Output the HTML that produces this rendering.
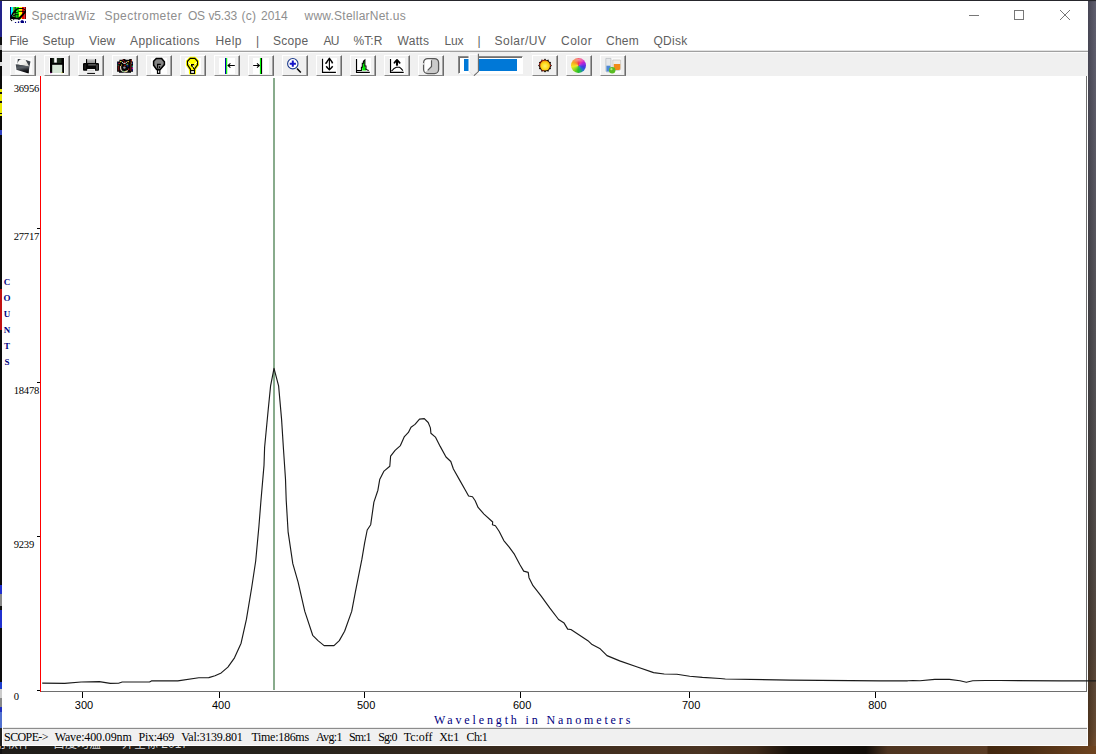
<!DOCTYPE html>
<html lang="en">
<head>
<meta charset="utf-8">
<title>SpectraWiz Spectrometer OS</title>
<style>
html,body{margin:0;padding:0;}
body{width:1096px;height:754px;overflow:hidden;position:relative;background:#1c1a17;font-family:"Liberation Sans",sans-serif;}
.abs{position:absolute;}
#desk-right{left:1088px;top:0;width:8px;height:754px;background:linear-gradient(to right,rgba(0,0,0,.16),rgba(255,255,255,.07)),linear-gradient(to bottom,#3a3a46 0px,#545364 2px,#535262 60px,#4a484e 300px,#48464a 380px,#463f3b 560px,#4a3a2e 650px,#5c3e23 730px,#70441f 754px);}
#desk-bottom{left:0;top:746px;width:1096px;height:8px;background:linear-gradient(to right,#1f1d19 0%,#25221c 25%,#33281d 40%,#3e2d1f 52%,#45301f 58%,#4a3422 64%,#3e2a1a 69%,#18110a 72%,#120d08 79%,#4d3420 81%,#5a3c24 90%,#42270f 90.2%,#4c2e14 94%,#6e4420 100%);}
#desk-text{left:0;top:746px;width:300px;height:8px;overflow:hidden;font-family:"Liberation Sans","Noto Sans CJK SC",sans-serif;font-size:12px;line-height:12px;color:#d8d8d8;}
#desk-text span{position:absolute;top:-8px;white-space:pre;text-shadow:0 0 1px #000;}
#desk-left{left:0;top:0;width:2px;height:754px;background:linear-gradient(to bottom,#333 0px,#333 1px,#22228a 1px,#22228a 37px,#111 37px,#111 45px,#aaa 45px,#aaa 50px,#0a0a0a 50px,#0a0a0a 62px,#ddd 62px,#ddd 66px,#0a0a0a 66px,#0a0a0a 88.7px,#e8e800 88.7px,#e8e800 92px,#111 92px,#111 94px,#e8e800 94px,#e8e800 101px,#111 101px,#111 103.5px,#e8e800 103.5px,#e8e800 113px,#111 113px,#111 114.5px,#e8e800 114.5px,#e8e800 116.4px,#0a0a0a 116.4px,#0a0a0a 129.6px,#3040c0 129.6px,#3040c0 135.4px,#0c0c0c 135.4px,#0c0c0c 288.5px,#c01010 288.5px,#c01010 330px,#0c0c0c 330px,#0c0c0c 585px,#2030d0 585px,#2030d0 594px,#888 594px,#888 606px,#111 606px,#111 610px,#2030d0 610px,#2030d0 628px,#0c0c0c 628px,#0c0c0c 682.5px,#2040d0 682.5px,#2040d0 689px,#ccc 689px,#ccc 698px,#888 698px,#888 707px,#2030c0 707px,#2030c0 712px,#5070d0 712px,#5070d0 728px,#222 728px,#222 746px,#111 746px,#111 754px);}
#desk-top{left:0;top:0;width:1096px;height:1px;background:#26262c;}
#win{left:2px;top:1px;width:1086px;height:745px;background:#fff;}
/* title */
.tt{position:absolute;top:8px;font-size:12px;line-height:16px;color:#8e8e8e;white-space:pre;}
.mn{position:absolute;top:32.5px;font-size:12px;line-height:16px;color:#606060;white-space:pre;}
#menusep1{left:2px;top:50px;width:1086px;height:1px;background:#e3e3e3;}
#menusep2{left:2px;top:51px;width:1086px;height:1px;background:#a0a0a0;}
#toolbar{left:2px;top:52px;width:1086px;height:24px;background:#f0f0f0;}
.btn{position:absolute;top:55px;width:26px;height:21px;background:#f0f0f0;box-sizing:border-box;border-left:1px solid #fff;border-top:1px solid #fff;border-right:1px solid #6b6b6b;border-bottom:1px solid #868686;box-shadow:inset -1px 0 0 #a4a4a4;}
.btn svg{position:absolute;}
/* plot */
#plot{left:2px;top:76px;width:1086px;height:652px;background:#fff;}
.yl{position:absolute;font-family:"Liberation Serif",serif;font-size:10.6px;line-height:11px;color:#000;left:13.8px;white-space:pre;letter-spacing:-0.26px;}
.xl{position:absolute;font-family:"Liberation Sans",sans-serif;font-size:11px;line-height:11px;color:#000;width:40px;text-align:center;top:700px;}
.cnt{position:absolute;left:3px;width:8px;text-align:center;font-family:"Liberation Serif",serif;font-weight:bold;font-size:9px;line-height:9px;color:#000080;}
#xlabel{left:434px;top:714.3px;font-family:"Liberation Serif",serif;font-size:12px;line-height:12px;color:#000080;white-space:pre;letter-spacing:2.87px;}
#statline{left:3px;top:727px;width:1084px;height:2px;background:linear-gradient(to bottom,#ececec 0,#ececec 1px,#8c8c8c 1px,#8c8c8c 2px);}
#status{left:3px;top:729px;width:1084px;height:16px;background:#f0f0f0;}
.st{position:absolute;top:729.6px;font-family:"Liberation Serif",serif;font-size:12px;line-height:14px;color:#000;white-space:pre;}
</style>
</head>
<body>
<div class="abs" id="desk-right"></div>
<div class="abs" id="desk-bottom"></div>
<div class="abs" id="desk-left"></div>
<div class="abs" id="desk-text"><span style="left:-6px">用软件</span><span style="left:53px">白度均温</span><span style="left:122px">外空标 2017</span></div>
<div class="abs" id="desk-top"></div>
<div class="abs" id="win"></div>

<!-- TITLE BAR -->
<svg class="abs" id="appicon" style="left:10px;top:7px" width="16" height="16" viewBox="0 0 16 16">
<rect x="0" y="0" width="1" height="12" fill="#000080"/><rect x="1" y="0" width="2.2" height="12" fill="#00ffff"/><rect x="3.2" y="0" width="1" height="12" fill="#808000"/><rect x="4.2" y="0" width="2" height="12" fill="#008000"/><rect x="6.2" y="0" width="3" height="12" fill="#00ff00"/><rect x="9.2" y="0" width="2.8" height="12" fill="#ffff00"/><rect x="12" y="0" width="2.6" height="12" fill="#ff0000"/><rect x="14.6" y="0" width="1.4" height="12" fill="#800000"/>
<path d="M7.4 1.5 H13 L15.6 3.4 M8.4 4.3 H14.6" stroke="#000" stroke-width="1" fill="none"/>
<path d="M16 3 L16 5.2 L10 12.4 L8.4 13 L8.2 11 L13 6 L14.4 4.2 Z" fill="#000"/>
<path d="M7.6 1.6 L6 3 L5 4.4 L3.4 5.6 L2.4 7.4 L1.4 8.8 L0.6 10.4" stroke="#000" stroke-width="1.5" fill="none"/>
<path d="M0.2 10.2 L2 9 L3.4 9.8 L6 10.6 L9.6 10.4 L9.4 12.4 L5 12.2 L0.6 12 Z" fill="#000"/>
<path d="M4.4 3.6 H6.2 M3.6 5.6 H7.8 M5 7.4 H8.6 M3 8.6 H5.4 M6.4 9 H8.4" stroke="#000" stroke-width="0.9" fill="none"/>
<rect x="0" y="12.2" width="1.4" height="0.9" fill="#000"/><rect x="1" y="13.1" width="1.2" height="1" fill="#000"/><rect x="3" y="12.3" width="1.2" height="0.8" fill="#000"/>
<rect x="4.9" y="15" width="1.3" height="1.1" fill="#000080"/><rect x="7.9" y="14.4" width="1.3" height="1.7" fill="#000080"/><path d="M10.3 14.6 L11.4 13.2 H13 L14 14.4 V16.1 H11 Z" fill="#000080"/><rect x="15.1" y="14" width="1" height="2.1" fill="#000080"/>
</svg>
<span class="tt" style="left:31.5px;letter-spacing:0.28px">SpectraWiz</span>
<span class="tt" style="left:104.5px;letter-spacing:0.47px">Spectrometer</span>
<span class="tt" style="left:188px;letter-spacing:-0.27px">OS</span>
<span class="tt" style="left:208.5px;letter-spacing:-0.17px">v5.33</span>
<span class="tt" style="left:241.5px;letter-spacing:0.2px">(c)</span>
<span class="tt" style="left:261px;letter-spacing:0px">2014</span>
<span class="tt" style="left:304.5px;letter-spacing:0.235px">www.StellarNet.us</span>
<svg class="abs" style="left:960px;top:4px" width="120" height="24" viewBox="0 0 120 24">
<path d="M9 11.5 H19" stroke="#777" stroke-width="1" fill="none"/>
<rect x="54.5" y="6.5" width="9" height="9" stroke="#777" stroke-width="1" fill="none"/>
<path d="M100 6 L110 16 M110 6 L100 16" stroke="#777" stroke-width="1" fill="none"/>
</svg>

<!-- MENU -->
<span class="mn" style="left:9.5px;letter-spacing:-0.17px">File</span>
<span class="mn" style="left:42.5px;letter-spacing:0.16px">Setup</span>
<span class="mn" style="left:89px;letter-spacing:0.1px">View</span>
<span class="mn" style="left:130px;letter-spacing:0.44px">Applications</span>
<span class="mn" style="left:215.5px;letter-spacing:0.4px">Help</span>
<span class="mn" style="left:256px">|</span>
<span class="mn" style="left:273px;letter-spacing:0.28px">Scope</span>
<span class="mn" style="left:323.5px;letter-spacing:-0.65px">AU</span>
<span class="mn" style="left:353.5px;letter-spacing:0.05px">%T:R</span>
<span class="mn" style="left:397.5px;letter-spacing:0.32px">Watts</span>
<span class="mn" style="left:444.5px;letter-spacing:-0.23px">Lux</span>
<span class="mn" style="left:477.5px">|</span>
<span class="mn" style="left:494.5px;letter-spacing:0.49px">Solar/UV</span>
<span class="mn" style="left:561px;letter-spacing:0.5px">Color</span>
<span class="mn" style="left:606px;letter-spacing:0.22px">Chem</span>
<span class="mn" style="left:653.5px;letter-spacing:0.24px">QDisk</span>
<div class="abs" id="menusep1"></div>
<div class="abs" id="menusep2"></div>

<!-- TOOLBAR -->
<div class="abs" id="toolbar"></div>
<div class="abs" style="left:2px;top:52px;width:448px;height:1px;background:#fbfbfb"></div>
<div class="abs" style="left:531px;top:52px;width:557px;height:1px;background:#fbfbfb"></div>
<!--BUTTONS-->
<div class="btn" style="left:10px"><svg width="24" height="20" viewBox="0 0 24 20" style="left:0;top:0"><rect x="4" y="2" width="17" height="16" fill="#fbfbfb"/><defs><linearGradient id="fg" x1="0.2" y1="0" x2="0.45" y2="1"><stop offset="0" stop-color="#3c4248"/><stop offset="0.4" stop-color="#5c6268"/><stop offset="0.75" stop-color="#1c1e22"/><stop offset="1" stop-color="#050506"/></linearGradient><linearGradient id="pp" x1="0" y1="0" x2="1" y2="1"><stop offset="0" stop-color="#ffffff"/><stop offset="0.6" stop-color="#f0f0ec"/><stop offset="1" stop-color="#c8c8c0"/></linearGradient></defs><path d="M6.8 3 L9.2 3 L14.9 4 L19.5 5.5 L18.4 10.8 L17.6 17 L6 13 Z" fill="#3a4046"/><path d="M6.2 7.4 Q7.6 4.2 9 3.4 Q11.6 2.2 14.6 4 L18.2 10.6 L4.8 8.2 Z" fill="url(#pp)"/><path d="M4.7 8.2 L17.9 10.5 L17.6 17.5 L5.4 13.7 Z" fill="url(#fg)"/></svg></div>
<div class="btn" style="left:44px"><svg width="24" height="20" viewBox="0 0 24 20" style="left:0;top:0"><rect x="4" y="2" width="16" height="16" fill="#fff"/><rect x="5" y="2" width="14" height="15" fill="#000"/><rect x="7.5" y="2" width="9" height="5" fill="#1c2a1c"/><rect x="9.2" y="2" width="2.6" height="4.6" fill="#fff"/><rect x="7.2" y="8.8" width="10" height="8.2" fill="#d6e6d6"/><rect x="5" y="16.4" width="1.6" height="0.8" fill="#800080"/><rect x="16.4" y="16.4" width="1.2" height="0.8" fill="#c0c000"/></svg></div>
<div class="btn" style="left:78px"><svg width="24" height="20" viewBox="0 0 24 20" style="left:0;top:0"><defs><linearGradient id="pg" x1="0" y1="0" x2="0" y2="1"><stop offset="0" stop-color="#c4c4c4"/><stop offset="1" stop-color="#8c8c8c"/></linearGradient></defs><rect x="7.4" y="3.2" width="9.4" height="4.4" fill="url(#pg)"/><rect x="7" y="3.1" width="1.1" height="4.6" fill="#000"/><rect x="16" y="3.1" width="1.1" height="4.6" fill="#000"/><path d="M4.6 7 H19.4 L20 7.8 V14 L19.4 14.7 H4.6 L4 14 V7.8 Z" fill="#050505"/><rect x="9.2" y="8.2" width="7.6" height="1.3" fill="#6a6a6a"/><rect x="17.2" y="8.6" width="1.6" height="5.2" fill="#4a4a4a"/><rect x="5.6" y="8.4" width="1" height="4.6" fill="#2c2c2c"/><rect x="8.2" y="13" width="7.8" height="4" fill="#f2f2f2"/><rect x="8.2" y="16.9" width="7.8" height="1" fill="#000"/><rect x="9" y="14.4" width="6" height="0.8" fill="#c4c4c4"/></svg></div>
<div class="btn" style="left:112px"><svg width="24" height="20" viewBox="0 0 24 20" style="left:0;top:0"><path d="M4.1 5.6 H6.4 V3.7 H9.8 V2.9 H12.4 V3.7 H16.2 V2.9 H18.8 V5.6 H20 V15.8 H18 V16.8 H6 V15.8 H4.1 Z" fill="#050505"/><path d="M7.6 10 Q7 15.6 11.4 15.8 Q14 15.8 14.8 14.4" fill="none" stroke="#d8c8b8" stroke-width="1.2"/><path d="M8.6 5.6 L10.6 7.4 L12.4 7.4 L14.4 5.4" fill="none" stroke="#d8d8d0" stroke-width="1"/><circle cx="11.4" cy="11.6" r="1.2" fill="#9090a0"/><rect x="9.6" y="3.6" width="1.2" height="1.2" fill="#c01010"/><rect x="11" y="5.6" width="1.2" height="1.2" fill="#e02020"/><rect x="14.8" y="5" width="1.2" height="1.2" fill="#e0b020"/><rect x="7" y="5" width="1.2" height="1.2" fill="#d8d020"/><rect x="5.4" y="6.8" width="1.4" height="1.2" fill="#d02020"/><rect x="11.4" y="8.8" width="1.2" height="1.2" fill="#d01010"/><rect x="13.2" y="8" width="1.4" height="1.4" fill="#10a090"/><rect x="14" y="9.2" width="1.4" height="1.4" fill="#1020a0"/><rect x="14.2" y="7.6" width="1" height="1" fill="#e0d020"/><rect x="8" y="8.6" width="1" height="1" fill="#e0c020"/><rect x="5" y="9" width="1.2" height="5.6" fill="#701010"/><rect x="4.6" y="8.6" width="1" height="1" fill="#10a060"/><rect x="17.2" y="8" width="1.4" height="7" fill="#601818"/><rect x="18.8" y="9.6" width="1.2" height="1.6" fill="#10a080"/><rect x="18.8" y="11.4" width="1.2" height="1.8" fill="#c010a0"/><rect x="18.8" y="13.2" width="1.2" height="1.4" fill="#1020a0"/><rect x="18.6" y="6.4" width="1.2" height="1.4" fill="#1020a0"/><rect x="17.8" y="6.6" width="1" height="1" fill="#e0d040"/><rect x="17.8" y="3.8" width="1" height="1" fill="#d01010"/><rect x="17.6" y="5.6" width="1" height="1" fill="#d01010"/><rect x="15" y="12.6" width="1.2" height="1.2" fill="#d02020"/><rect x="9.6" y="14.8" width="1.2" height="1" fill="#40c060"/><rect x="12.4" y="14.8" width="1.4" height="1" fill="#e0e060"/><rect x="4.2" y="6.4" width="1" height="1.2" fill="#101080"/></svg></div>
<div class="btn" style="left:146px"><svg width="24" height="20" viewBox="0 0 24 20" style="left:0;top:0"><rect x="4" y="2" width="16" height="16" fill="#fff"/><path d="M9.3 2.4 H14.6 L17.4 5.8 V8.6 L13.2 13.4 H9.6 L6.6 9.2 V5.3 Z" fill="#848484" stroke="#000" stroke-width="1.5" stroke-linejoin="miter"/><rect x="10.5" y="14" width="2.3" height="3.4" fill="#fff" stroke="#000" stroke-width="1.2"/><path d="M10.6 12.6 V8.4 H13.8 M12.6 10.2 V12" fill="none" stroke="#000" stroke-width="1.1"/></svg></div>
<div class="btn" style="left:180px"><svg width="24" height="20" viewBox="0 0 24 20" style="left:0;top:0"><rect x="4" y="2" width="16" height="16" fill="#fff"/><path d="M9.3 2.4 H13.8 L16.5 5.3 V8.8 L14.3 11.8 L13.5 13.3 V17 H9.5 V13.3 L8.5 11.8 L6.5 8.8 V5.3 Z" fill="#ffff00" stroke="#ffff00" stroke-width="3.2" stroke-linejoin="round"/><path d="M9.3 2.4 H13.8 L16.5 5.3 V8.8 L14.3 11.8 L13.5 13.3 V14.5 H9.5 V13.3 L8.5 11.8 L6.5 8.8 V5.3 Z" fill="#ffff00" stroke="#000" stroke-width="1.2"/><rect x="9.6" y="14.6" width="3.9" height="2.8" fill="#fff" stroke="#000" stroke-width="1.1"/><path d="M10.6 10.4 V8.6 H13.2 M11.6 9.6 L13 13" fill="none" stroke="#000" stroke-width="1.2"/><path d="M7.2 6.6 L10 8.6 M15.8 6.2 L13.4 8.2 M12.2 9.4 L13 11.4" fill="none" stroke="#fff" stroke-width="1"/></svg></div>
<div class="btn" style="left:214px"><svg width="24" height="20" viewBox="0 0 24 20" style="left:0;top:0"><rect x="4" y="2" width="16" height="16" fill="#fff"/><rect x="10" y="2" width="1.1" height="16" fill="#0000a8"/><rect x="11.1" y="2" width="1.1" height="16" fill="#00f000"/><path d="M12.8 9.5 H19.8 M15.4 7.4 L13 9.5 L15.4 11.6" fill="none" stroke="#000" stroke-width="1.05"/></svg></div>
<div class="btn" style="left:248px"><svg width="24" height="20" viewBox="0 0 24 20" style="left:0;top:0"><rect x="4" y="2" width="16" height="16" fill="#fff"/><rect x="10.9" y="2" width="1.1" height="16" fill="#00f000"/><rect x="12" y="2" width="1.1" height="16" fill="#000"/><path d="M4.2 9.5 H10.4 M8 7.4 L10.4 9.5 L8 11.6" fill="none" stroke="#000" stroke-width="1.05"/></svg></div>
<div class="btn" style="left:282px"><svg width="24" height="20" viewBox="0 0 24 20" style="left:0;top:0"><circle cx="9.8" cy="7.7" r="5.2" fill="#fff" stroke="#1c3a8c" stroke-width="1.1"/><path d="M9.8 4.6 V10.8 M6.7 7.7 H12.9" stroke="#1414c8" stroke-width="2" fill="none"/><path d="M14 12.4 L17.8 16.6" stroke="#000" stroke-width="1.5" fill="none"/></svg></div>
<div class="btn" style="left:316px"><svg width="24" height="20" viewBox="0 0 24 20" style="left:0;top:0"><rect x="4" y="2" width="16" height="16" fill="#fff"/><path d="M5.5 2.8 V16.4 H18.9" fill="none" stroke="#000" stroke-width="1.2"/><path d="M12.4 2.6 V13.4" fill="none" stroke="#000" stroke-width="1.1"/><path d="M8.2 7.3 L9.4 7 L10.2 5.4 L12.4 2.4 L14.6 5.4 L15.6 7.4 M9.2 10.2 L10.6 12 L12.4 13.6 L14.2 12 L15.7 10.3" fill="none" stroke="#000" stroke-width="1.5" stroke-linejoin="round"/></svg></div>
<div class="btn" style="left:350px"><svg width="24" height="20" viewBox="0 0 24 20" style="left:0;top:0"><rect x="4" y="2" width="16" height="16" fill="#fff"/><path d="M5.5 3.1 V16.4 H18.8" fill="none" stroke="#000" stroke-width="1.2"/><path d="M11.2 14.4 V11.3 L12 7.3 L13.2 5.4 L13.9 4.6 V9.9 L15.1 13.3 V14.4 Z" fill="#00ee00"/><path d="M5.5 14.4 H10.4 V11.3 H11.3 V7.3 H12.4 V5.3 L13.9 4 V9.9 H15 V13.4 L17.7 14.4" fill="none" stroke="#000" stroke-width="1.05"/></svg></div>
<div class="btn" style="left:384px"><svg width="24" height="20" viewBox="0 0 24 20" style="left:0;top:0"><rect x="4" y="2" width="16" height="16" fill="#fff"/><path d="M5.5 3.1 V16.4 H18.7" fill="none" stroke="#000" stroke-width="1.2"/><path d="M6.2 14.8 L7.4 14.4 L9.1 12.4 L11.4 11.3 H14.6 L16.4 12.8 L17.9 14.7" fill="none" stroke="#000" stroke-width="1.1"/><path d="M12 4.4 V9.7" stroke="#000" stroke-width="2.1" fill="none"/><path d="M9.4 6.8 L10.6 5.4 L12 3.8 L13.4 5.4 L14.7 6.8" fill="none" stroke="#000" stroke-width="1.7" stroke-linejoin="round" stroke-linecap="round"/></svg></div>
<div class="btn" style="left:418px"><svg width="24" height="20" viewBox="0 0 24 20" style="left:0;top:0"><rect x="4.6" y="2.6" width="15" height="15" rx="4.2" fill="#fff"/><path d="M12.5 2.6 H15.4 Q19.6 2.6 19.6 6.8 V13.4 Q19.6 17.6 15.4 17.6 H8.8 Q6.6 17.6 5.6 16.4 L8.5 14.5 L12.5 10.5 Z" fill="#cacaca"/><rect x="4.6" y="2.6" width="15" height="15" rx="4.2" fill="none" stroke="#585858" stroke-width="1.3"/><path d="M12.5 4.2 V10.5 L8.7 14.3" fill="none" stroke="#585858" stroke-width="1.2"/><rect x="3.6" y="7.2" width="1.6" height="1.4" fill="#f0f0f0"/></svg></div>
<div class="btn" style="left:532px"><svg width="24" height="20" viewBox="0 0 24 20" style="left:0;top:0"><defs><radialGradient id="sg" cx="0.5" cy="0.55" r="0.6"><stop offset="0" stop-color="#ffee70"/><stop offset="0.55" stop-color="#ffdc18"/><stop offset="1" stop-color="#f08a10"/></radialGradient></defs><polygon points="19.00,9.60 17.41,11.05 18.06,13.10 15.96,13.56 15.50,15.66 13.45,15.01 12.00,16.60 10.55,15.01 8.50,15.66 8.04,13.56 5.94,13.10 6.59,11.05 5.00,9.60 6.59,8.15 5.94,6.10 8.04,5.64 8.50,3.54 10.55,4.19 12.00,2.60 13.45,4.19 15.50,3.54 15.96,5.64 18.06,6.10 17.41,8.15" fill="#181008"/><circle cx="12" cy="9.6" r="5.7" fill="#181008"/><circle cx="12" cy="9.6" r="5" fill="url(#sg)"/><rect x="9.2" y="3.8" width="1.1" height="1.1" fill="#e82010"/><rect x="7.2" y="5.2" width="1.1" height="1.1" fill="#e82010"/><rect x="6.2" y="7.2" width="1.1" height="1.1" fill="#e82010"/><rect x="11.4" y="4" width="1.1" height="1.1" fill="#e82010"/><rect x="17" y="8.8" width="1" height="1" fill="#e82010"/><rect x="9.4" y="14.2" width="1" height="1" fill="#e82010"/><rect x="6.4" y="9.2" width="1" height="1" fill="#e82010"/></svg></div>
<div class="btn" style="left:566px"><svg width="24" height="20" viewBox="0 0 24 20" style="left:0;top:0"></svg><div style="position:absolute;left:4.2px;top:2px;width:14.8px;height:14.8px;border-radius:50%;background:radial-gradient(ellipse 50% 22% at 50% 12%,rgba(255,255,255,.5) 0%,rgba(255,255,255,0) 100%),radial-gradient(circle at 50% 50%,rgba(255,255,255,.14) 0%,rgba(255,255,255,0) 40%,rgba(0,0,0,0) 78%,rgba(0,0,0,.3) 100%),conic-gradient(from 0deg,#f0283a 0deg,#e820b0 40deg,#a028e0 70deg,#4038e0 105deg,#2070d0 135deg,#20b060 160deg,#28c028 185deg,#90d820 225deg,#f0e820 260deg,#f8a020 305deg,#f0283a 360deg)"></div></div>
<div class="btn" style="left:600px"><svg width="24" height="20" viewBox="0 0 24 20" style="left:0;top:0"><rect x="4.3" y="2" width="15.8" height="15.4" fill="#fbfbfb"/><path d="M4.8 2.4 H10 V15 Q10 16 9 16 H5.8 Q4.8 16 4.8 15 Z" fill="#e6e8ea" stroke="#b4b8bc" stroke-width="0.7"/><rect x="5.4" y="9.7" width="4" height="5.8" fill="#4c88d6"/><path d="M11.8 4 H19.6 V12.8 Q19.6 14.3 18 14.3 H13.4 Q11.8 14.3 11.8 12.8 Z" fill="#efece8" stroke="#c4c0ba" stroke-width="0.7"/><path d="M12.8 8 H19.2 V12.8 Q19.2 13.9 18 13.9 H14 Q12.8 13.9 12.8 12.8 Z" fill="#f28a16"/><circle cx="11.2" cy="14.3" r="3.2" fill="#58bc22"/><circle cx="10.4" cy="13.2" r="1.1" fill="#b4ea88"/></svg></div>
<div class="abs" style="left:458px;top:56px;width:65px;height:18px;box-sizing:border-box;background:#fff;border-left:1px solid #8a8a8a;border-top:1px solid #8a8a8a;border-right:1px solid #fff;border-bottom:1px solid #fff;box-shadow:inset 1px 1px 0 #6e6e6e"></div>
<div class="abs" style="left:464px;top:59px;width:53px;height:12px;background:#0078d7"></div>
<svg class="abs" style="left:467px;top:52px" width="14" height="25" viewBox="0 0 14 25"><path d="M1.7 1.7 H11.7 V19.6 L6.7 24 L1.7 19.6 Z" fill="#f0f0f0"/><path d="M2.2 19.6 V2.2 H11" fill="none" stroke="#fff" stroke-width="1"/><path d="M11.4 1.7 V19.6 L6.7 23.8" fill="none" stroke="#696969" stroke-width="1.1"/><path d="M6.7 23.8 L2 19.6" fill="none" stroke="#e3e3e3" stroke-width="1"/></svg>

<!-- PLOT -->
<div class="abs" id="plot"></div>
<svg class="abs" id="plotsvg" style="left:0;top:0" width="1096" height="754" viewBox="0 0 1096 754">
<!--PLOTCONTENT-->
<rect x="40" y="76" width="1" height="616" fill="#ff0000"/>
<rect x="41" y="691" width="1046" height="1" fill="#6e6e6e"/>
<rect x="1086" y="76" width="1" height="616" fill="#6e6e6e"/>
<rect x="37" y="228" width="3" height="1" fill="#000"/>
<rect x="37" y="382" width="3" height="1" fill="#000"/>
<rect x="37" y="536" width="3" height="1" fill="#000"/>
<rect x="37" y="690" width="3" height="1" fill="#000"/>
<rect x="82" y="692" width="1" height="6" fill="#000"/>
<rect x="219" y="692" width="1" height="6" fill="#000"/>
<rect x="364" y="692" width="1" height="6" fill="#000"/>
<rect x="520" y="692" width="1" height="6" fill="#000"/>
<rect x="689" y="692" width="1" height="6" fill="#000"/>
<rect x="875" y="692" width="1" height="6" fill="#000"/>
<rect x="273" y="78" width="2" height="612" fill="#88ab8c"/>
<polyline points="42.2,683.1 64.7,683.4 81.1,682.0 99.3,681.6 110.3,683.4 118.5,683.2 122.2,682.0 149.5,682.0 151.4,680.9 177.8,680.9 198.8,677.8 208.8,677.6 215.0,675.8 221.2,672.9 227.9,667.1 234.5,657.8 241.1,643.2 246.4,619.4 251.7,587.5 255.7,561.0 258.9,526.5 261.0,500.0 264.0,465.4 264.6,447.5 268.2,409.7 270.6,385.8 274.0,368.3 278.6,385.8 281.6,419.6 283.5,449.5 285.5,479.3 286.2,500.0 288.1,531.8 292.8,563.7 298.1,582.2 304.8,611.4 312.7,635.3 318.0,640.6 324.1,645.6 334.0,645.6 339.3,640.6 344.6,631.3 351.7,611.4 355.2,592.8 361.9,559.2 364.6,543.2 367.2,530.0 370.7,524.7 373.9,502.1 377.9,490.2 379.7,479.6 384.0,471.1 389.8,466.3 390.6,456.2 395.1,450.4 400.4,445.6 404.4,436.6 408.4,432.4 411.0,427.3 415.0,424.4 419.5,419.1 424.3,418.6 428.2,422.5 430.4,427.9 430.9,433.2 435.4,437.1 440.2,446.4 446.0,457.0 450.8,461.5 453.4,469.0 460.1,480.9 465.4,490.2 468.6,496.0 472.5,496.8 475.2,500.8 478.1,507.4 484.0,514.1 492.7,522.0 492.4,524.7 495.4,525.7 499.1,531.3 503.8,540.6 509.2,547.2 514.5,554.4 519.8,564.5 523.7,571.1 528.2,572.4 529.0,577.7 533.0,585.7 538.3,592.3 541.2,596.2 549.7,607.9 558.6,619.5 564.1,623.1 567.7,629.1 570.9,629.5 581.5,636.5 587.9,640.7 592.1,644.6 600.2,648.8 607.0,655.6 619.7,660.9 636.6,666.8 653.6,672.6 664.2,674.0 676.9,674.3 689.7,676.2 702.4,677.4 720.0,678.5 725.3,679.0 790.3,680.1 880.6,680.8 907.7,680.8 913.0,680.5 920.0,680.8 934.8,679.4 949.3,679.4 960.0,680.8 966.3,682.3 972.8,680.8 985.4,680.5 999.9,680.5 1061.3,680.8 1096.0,680.8" fill="none" stroke="#1a1a1a" stroke-width="1.15" stroke-linejoin="round"/>
</svg>
<span class="yl" style="top:83px">36956</span>
<span class="yl" style="top:231px">27717</span>
<span class="yl" style="top:385px">18478</span>
<span class="yl" style="top:539px">9239</span>
<span class="yl" style="top:691px">0</span>
<span class="cnt" style="top:277.6px">C</span>
<span class="cnt" style="top:293.6px">O</span>
<span class="cnt" style="top:309.6px">U</span>
<span class="cnt" style="top:325.6px">N</span>
<span class="cnt" style="top:341.6px">T</span>
<span class="cnt" style="top:357.6px">S</span>
<span class="xl" style="left:64px">300</span>
<span class="xl" style="left:201.2px">400</span>
<span class="xl" style="left:346.2px">500</span>
<span class="xl" style="left:502.1px">600</span>
<span class="xl" style="left:671.2px">700</span>
<span class="xl" style="left:857.4px">800</span>
<span class="abs" id="xlabel">Wavelength in Nanometers</span>

<!-- STATUS -->
<div class="abs" id="statline"></div>
<div class="abs" id="status"></div>
<div id="stattext"><span class="st" style="left:4.1px;letter-spacing:-0.618px">SCOPE-&gt;</span><span class="st" style="left:54.7px;letter-spacing:-0.137px">Wave:400.09nm</span><span class="st" style="left:138.5px;letter-spacing:-0.263px">Pix:469</span><span class="st" style="left:181.3px;letter-spacing:-0.262px">Val:3139.801</span><span class="st" style="left:251.4px;letter-spacing:-0.285px">Time:186ms</span><span class="st" style="left:315.9px;letter-spacing:-0.602px">Avg:1</span><span class="st" style="left:349.1px;letter-spacing:-0.986px">Sm:1</span><span class="st" style="left:378.3px;letter-spacing:-0.929px">Sg:0</span><span class="st" style="left:403.7px;letter-spacing:-0.006px">Tc:off</span><span class="st" style="left:439.3px;letter-spacing:-0.486px">Xt:1</span><span class="st" style="left:466.6px;letter-spacing:-0.686px">Ch:1</span></div>
</body>
</html>
